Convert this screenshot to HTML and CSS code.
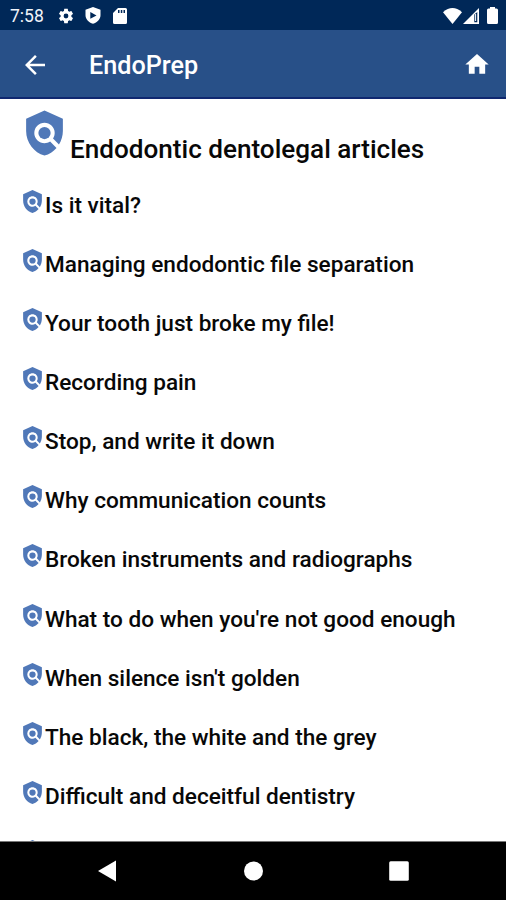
FILE: index.html
```
<!DOCTYPE html>
<html lang="en">
<head>
<meta charset="utf-8">
<title>EndoPrep</title>
<link rel="stylesheet" href="styles.css">
</head>
<body>
<svg class="defs" aria-hidden="true">
  <symbol id="policy" viewBox="0 0 24 24"><path d="M21 5l-9-4-9 4v6c0 5.55 3.84 10.74 9 12 2.3-.56 4.33-1.9 5.88-3.71l-3.12-3.12c-1.94 1.29-4.58 1.07-6.29-.64-1.95-1.95-1.95-5.12 0-7.07 1.95-1.95 5.12-1.95 7.07 0 1.71 1.71 1.92 4.35.64 6.29l2.9 2.9C20.29 15.69 21 13.38 21 11V5z"/><circle cx="12" cy="12" r="3"/></symbol>
</svg>
<div class="screen">
  <div class="status">
    <span class="clock">7:58</span>
    <svg class="gear" viewBox="0 0 24 24"><path d="M19.14 12.94c.04-.3.06-.61.06-.94 0-.32-.02-.64-.07-.94l2.03-1.58c.18-.14.23-.41.12-.61l-1.92-3.32c-.12-.22-.37-.29-.59-.22l-2.39.96c-.5-.38-1.03-.7-1.62-.94l-.36-2.54c-.04-.24-.24-.41-.48-.41h-3.84c-.24 0-.43.17-.47.41l-.36 2.54c-.59.24-1.13.57-1.62.94l-2.39-.96c-.22-.08-.47 0-.59.22L2.74 8.87c-.12.21-.08.47.12.61l2.03 1.58c-.05.3-.09.63-.09.94s.02.64.07.94l-2.03 1.58c-.18.14-.23.41-.12.61l1.92 3.32c.12.22.37.29.59.22l2.39-.96c.5.38 1.03.7 1.62.94l.36 2.54c.05.24.24.41.48.41h3.84c.24 0 .44-.17.47-.41l.36-2.54c.59-.24 1.13-.56 1.62-.94l2.39.96c.22.08.47 0 .59-.22l1.92-3.32c.12-.22.07-.47-.12-.61l-2.01-1.58zM12 15.2A3.2 3.2 0 1 1 12 8.800a3.200 3.200 0 0 1 0 6.400z"/></svg>
    <svg class="protect" viewBox="0 0 16 17"><path fill-rule="evenodd" d="M8 0l7.500 2.700v5.500c0 4-3.200 7.200-7.500 8.600C3.700 15.400.5 12.200.5 8.200V2.700zM5.300 5v6.800L11.500 8.400z"/></svg>
    <svg class="card" viewBox="0 0 14 16"><path fill-rule="evenodd" d="M5 0h7.500Q14 0 14 1.500v13q0 1.500-1.500 1.500h-11Q0 16 0 14.500V5zM5 2v3h1.500V2zM7.800 2v3h1.500V2zM10.500 2v3H12V2z"/></svg>
    <span class="spacer"></span>
    <svg class="wifi" viewBox="0 0 19 16"><path d="M0 4.200Q9.500-4.200 19 4.200L9.500 16z"/></svg>
    <svg class="signal" viewBox="0 0 16 16"><path fill-rule="evenodd" d="M16 0v16H0zM11.300 6.500v7.800H14.300V4z"/><path d="M12.100 6h1v7h-1z"/></svg>
    <svg class="battery" viewBox="0 0 11 17"><path d="M3 0h5v1.500h1.500Q11 1.500 11 3v12.500q0 1.500-1.500 1.500h-8Q0 17 0 15.500V3q0-1.500 1.500-1.500H3z"/></svg>
  </div>
  <header class="appbar">
    <svg class="back" viewBox="0 0 24 24"><path d="M20 11H7.830l5.590-5.590L12 4l-8 8 8 8 1.410-1.410L7.830 13H20z"/></svg>
    <span class="title">EndoPrep</span>
    <span class="spacer"></span>
    <svg class="home" viewBox="0 0 24 24"><path d="M10 20v-6h4v6h5v-8h3L12 3 2 12h3v8z"/></svg>
  </header>
  <main class="content">
    <h1 class="heading"><svg class="badge"><use href="#policy"/></svg><span>Endodontic dentolegal articles</span></h1>
    <ul class="articles">
      <li><svg class="mark"><use href="#policy"/></svg><span>Is it vital?</span></li>
      <li><svg class="mark"><use href="#policy"/></svg><span>Managing endodontic file separation</span></li>
      <li><svg class="mark"><use href="#policy"/></svg><span>Your tooth just broke my file!</span></li>
      <li><svg class="mark"><use href="#policy"/></svg><span>Recording pain</span></li>
      <li><svg class="mark"><use href="#policy"/></svg><span>Stop, and write it down</span></li>
      <li><svg class="mark"><use href="#policy"/></svg><span>Why communication counts</span></li>
      <li><svg class="mark"><use href="#policy"/></svg><span>Broken instruments and radiographs</span></li>
      <li><svg class="mark"><use href="#policy"/></svg><span>What to do when you're not good enough</span></li>
      <li><svg class="mark"><use href="#policy"/></svg><span>When silence isn't golden</span></li>
      <li><svg class="mark"><use href="#policy"/></svg><span>The black, the white and the grey</span></li>
      <li><svg class="mark"><use href="#policy"/></svg><span>Difficult and deceitful dentistry</span></li>
      <li><svg class="mark"><use href="#policy"/></svg></li>
    </ul>
  </main>
  <nav class="navbar">
    <svg viewBox="0 0 24 24"><path d="M21 1.500v21L3 12z"/></svg>
    <svg viewBox="0 0 24 24"><circle cx="12.500" cy="12" r="9.500"/></svg>
    <svg viewBox="0 0 24 24"><rect x="2.200" y="2.200" width="19.600" height="19.600" rx="1.500"/></svg>
  </nav>
</div>
</body>
</html>
```
FILE: styles.css
```
* { box-sizing: border-box; }
body { margin: 0; font-family: Roboto, sans-serif; color: #080808; background: #fff; }
svg { display: block; flex: none; fill: #fff; }
.defs { display: none; }
.screen { display: flex; flex-direction: column; width: 506px; height: 900px; overflow: hidden; }
.spacer { flex: 1; }
.status { display: flex; align-items: center; flex: none; height: 30px; padding: 1px 8px 0 10px; background: #002858; }
.clock { width: 47px; font-size: 17.500px; line-height: 20px; color: #f0f4fa; }
.gear { width: 18px; height: 18px; margin-right: 10px; }
.protect { width: 16px; height: 17px; margin-right: 12px; }
.card { width: 14px; height: 16px; }
.wifi { width: 19px; height: 16px; margin-right: 1px; }
.signal { width: 16px; height: 16px; margin-right: 8px; }
.battery { width: 11px; height: 17px; }
.appbar { display: flex; align-items: center; flex: none; height: 69px; padding: 2px 15px 0 20px; background: #285088; border-bottom: 2px solid #102870; }
.back { width: 30px; height: 30px; }
.title { margin-left: 39px; padding-top: 3px; font-size: 25.200px; font-weight: 500; line-height: 30px; color: #fff; }
.home { width: 28px; height: 29px; margin-bottom: 1px; }
.content { flex: 1; min-height: 0; overflow: hidden; padding: 9px 20px 0; }
.heading { display: flex; align-items: flex-end; height: 59px; margin: 0 0 12px; padding-bottom: 8px; font-size: 26.100px; font-weight: 500; line-height: 20px; white-space: nowrap; }
.badge { width: 49px; height: 50px; margin: 0 1px 1px 0; }
.mark { width: 25px; height: 25px; }
.badge, .mark { fill: #5078b8; }
.heading span { height: 20px; }
.articles { list-style: none; margin: 0; padding: 10px 0 0; }
.articles li { display: flex; height: 59.080px; font-size: 22.600px; font-weight: 500; line-height: 32px; white-space: nowrap; }
.articles span { margin-top: 1px; }
.navbar { display: grid; grid-template-columns: repeat(3, 146px); justify-content: center; justify-items: center; align-items: center; flex: none; height: 59px; border-top: 1px solid #777; background: #000; }
.navbar svg { width: 24px; height: 24px; }
```
